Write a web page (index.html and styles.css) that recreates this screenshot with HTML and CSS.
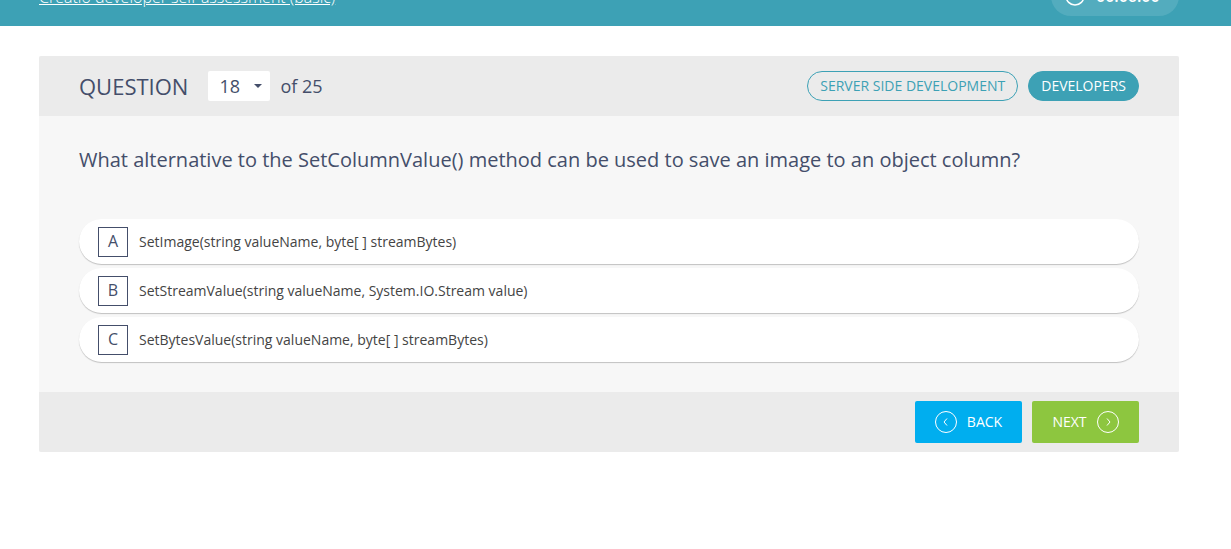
FILE: index.html
```html
<!DOCTYPE html>
<html lang="en">
<head>
<meta charset="utf-8">
<title>Creatio developer self-assessment (basic)</title>
<link rel="stylesheet" href="styles.css">
</head>
<body>
<header class="topbar">
  <a class="topbar-title" href="#">Creatio developer self-assessment (basic)</a>
  <div class="timer">
    <svg class="timer-icon" viewBox="0 0 20 20" width="20" height="20" aria-hidden="true"><circle cx="10" cy="10" r="9"/><path d="M10 5v5h4"/></svg>
    <span>00:06:00</span>
  </div>
</header>
<main class="page">
  <form class="card">
    <div class="card-head">
      <label class="head-label" for="question">QUESTION</label>
      <span class="picker">
        <select class="picker-select" id="question"><option>18</option></select>
        <svg class="picker-arrow" viewBox="0 0 8 4" width="8" height="4" aria-hidden="true"><path d="M0 0h8L4 4z"/></svg>
      </span>
      <span class="head-total">of 25</span>
      <div class="tags">
        <span class="tag">SERVER SIDE DEVELOPMENT</span>
        <span class="tag tag-solid">DEVELOPERS</span>
      </div>
    </div>
    <div class="card-body">
      <h1 class="question">What alternative to the SetColumnValue() method can be used to save an image to an object column?</h1>
      <div class="answers">
        <label class="answer"><input class="answer-input" type="radio" name="answer"><span class="letter">A</span><span>SetImage(string valueName, byte[ ] streamBytes)</span></label>
        <label class="answer"><input class="answer-input" type="radio" name="answer"><span class="letter">B</span><span>SetStreamValue(string valueName, System.IO.Stream value)</span></label>
        <label class="answer"><input class="answer-input" type="radio" name="answer"><span class="letter">C</span><span>SetBytesValue(string valueName, byte[ ] streamBytes)</span></label>
      </div>
    </div>
    <div class="card-foot">
      <button class="btn btn-back" type="button"><svg viewBox="0 0 22 22" width="22" height="22" aria-hidden="true"><circle cx="11" cy="11" r="10.5"/><path d="M12 7.5 9 11l3 3.5"/></svg>BACK</button>
      <button class="btn btn-next" type="button">NEXT<svg viewBox="0 0 22 22" width="22" height="22" aria-hidden="true"><circle cx="11" cy="11" r="10.5"/><path d="M10 7.5l3 3.5-3 3.5"/></svg></button>
    </div>
  </form>
</main>
</body>
</html>
```
FILE: styles.css
```css
* { box-sizing: border-box; }
body {
  margin: 0;
  background: #fff;
  color: #444e6a;
  font-family: "Open Sans", "Noto Sans", sans-serif;
  font-size: 14px;
}
.topbar {
  display: flex;
  align-items: flex-end;
  justify-content: space-between;
  height: 26px;
  padding: 0 52px 10px 39px;
  overflow: hidden;
  background: #3da1b5;
  color: #fff;
}
.topbar-title {
  padding-bottom: 7px;
  color: #fff;
  font-size: 16px;
  font-weight: 300;
  line-height: 24px;
}
.timer {
  display: flex;
  flex: none;
  align-items: center;
  gap: 11px;
  width: 128px;
  height: 40px;
  padding: 0 14px;
  border-radius: 20px;
  background: #53acbe;
  font-size: 16px;
  font-weight: 600;
}
.timer-icon { flex: none; fill: none; stroke: #fff; stroke-width: 1.5; }
.page { padding: 30px 52px 30px 39px; }
.card { border-radius: 2px; overflow: hidden; background: #f7f7f7; }
.card-head {
  display: flex;
  align-items: center;
  height: 60px;
  padding: 0 40px;
  background: #ebebeb;
}
.head-label { margin-right: 20px; font-size: 22px; }
.picker { position: relative; margin-right: 10px; }
.picker-select {
  display: block;
  width: 62px;
  height: 30px;
  padding: 0 0 0 11px;
  border: 0;
  border-radius: 2px;
  appearance: none;
  background: #fff;
  color: inherit;
  font: 18px "Open Sans", "Noto Sans", sans-serif;
}
.picker-arrow {
  position: absolute;
  top: 13px;
  right: 8px;
  fill: #444e6a;
  pointer-events: none;
}
.head-total { font-size: 18px; }
.tags { display: flex; gap: 10px; margin-left: auto; }
.tag {
  padding: 0 12px;
  border: 1px solid #3da1b5;
  border-radius: 15px;
  color: #3da1b5;
  line-height: 28px;
}
.tag-solid { background: #3da1b5; color: #fff; }
.card-body { padding: 30px 40px; }
.question {
  margin: 0 0 45px;
  font-size: 20px;
  font-weight: 400;
  line-height: 28px;
}
.answers { display: grid; gap: 4px; }
.answer {
  display: flex;
  position: relative;
  align-items: center;
  gap: 11px;
  height: 45px;
  padding: 0 19px;
  border-radius: 23px;
  background: #fff;
  box-shadow: 0 1px 1px rgba(0, 0, 0, 0.22);
  color: #444;
  cursor: pointer;
}
.answer-input { position: absolute; opacity: 0; }
.letter {
  width: 30px;
  height: 30px;
  border: 1px solid #444e6a;
  color: #444e6a;
  font-size: 16px;
  line-height: 27px;
  text-align: center;
}
.card-foot {
  display: flex;
  align-items: center;
  justify-content: flex-end;
  gap: 10px;
  height: 60px;
  padding: 0 40px;
  background: #ebebeb;
}
.btn {
  display: flex;
  align-items: center;
  justify-content: center;
  gap: 10px;
  width: 107px;
  height: 42px;
  padding: 0;
  border: 0;
  border-radius: 2px;
  color: #fff;
  font: 500 14px/20px "Open Sans", "Noto Sans", sans-serif;
}
.btn svg { fill: none; stroke: #fff; stroke-width: 1; }
.btn-back { background: #00aeef; }
.btn-next { background: #8dc63f; }
```
